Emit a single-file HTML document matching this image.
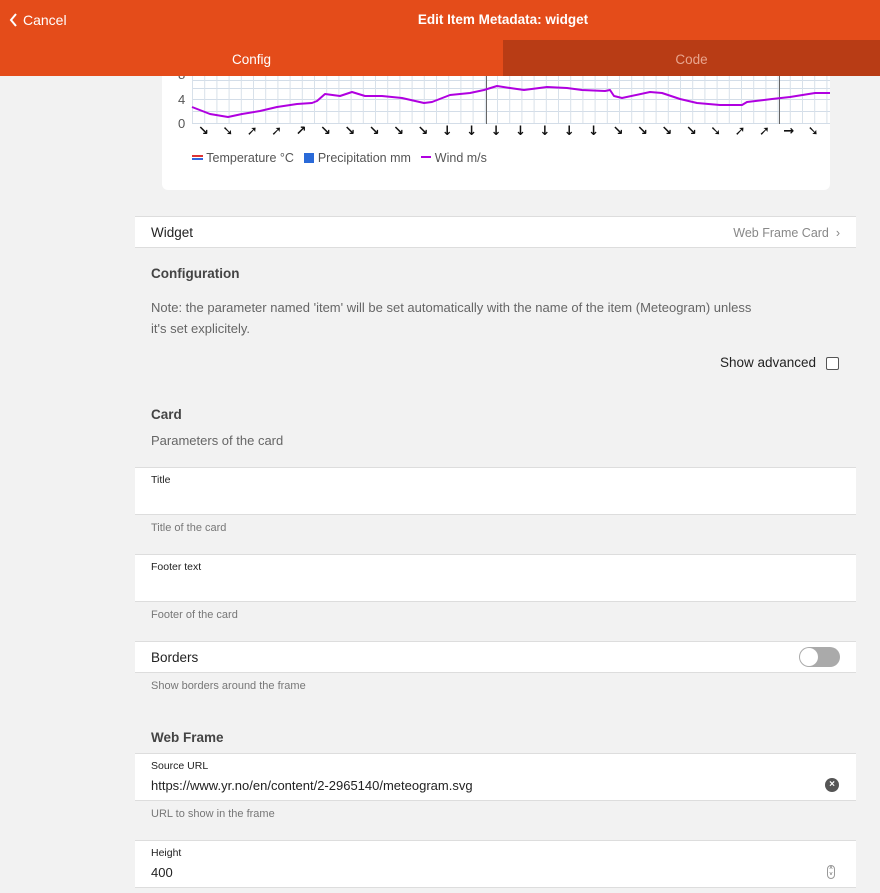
<!DOCTYPE html>
<html><head><meta charset="utf-8"><style>
*{margin:0;padding:0;box-sizing:border-box}
body{width:880px;height:893px;overflow:hidden;background:#f2f2f2;font-family:"Liberation Sans",sans-serif;position:relative;color:#222}
.a{position:absolute}
.hdr{left:0;top:0;width:880px;height:40px;background:#e44c1a;color:#fff}
.row{position:absolute;left:135px;width:721px;background:#fff;border-top:1px solid #ddd;border-bottom:1px solid #ddd}
.sm{font-size:10.5px;color:#222}
.gray{color:#777;font-size:11px}
.hd{font-size:13.5px;font-weight:bold;color:#444}
.ar span{display:inline-block;width:24.4px}
</style></head><body>
<div class="a hdr">
 <svg class="a" style="left:9px;top:13px" width="10" height="14"><path d="M7 1 L2 7 L7 13" fill="none" stroke="#fff" stroke-width="2"/></svg>
 <div class="a" style="left:23px;top:12px;font-size:14px">Cancel</div>
 <div class="a" style="left:0;width:1006px;text-align:center;top:12px;font-size:13.5px;font-weight:bold">Edit Item Metadata: widget</div>
</div>
<div class="a" style="left:0;top:40px;width:503px;height:36px;background:#e44c1a;color:#fff;font-size:13.5px;text-align:center;line-height:40px">Config</div>
<div class="a" style="left:503px;top:40px;width:377px;height:36px;background:#b83c15;color:#e8a58e;font-size:13.5px;text-align:center;line-height:40px">Code</div>

<div class="a" style="left:162px;top:76px;width:668px;height:114px;background:#fff;border-radius:0 0 6px 6px"></div>
<svg class="a" style="left:162px;top:76px" width="668" height="90">
 <g stroke="#d3dde8" stroke-width="1">
  <line x1="30" y1="4.5" x2="668" y2="4.5"/><line x1="30" y1="12.5" x2="668" y2="12.5"/><line x1="30" y1="23.5" x2="668" y2="23.5"/><line x1="30" y1="35.5" x2="668" y2="35.5"/><line x1="30" y1="47.5" x2="668" y2="47.5"/>
 </g>
 <g stroke="#d8e1ea" stroke-width="1" id="v"></g>
 <script>
 var g=document.getElementById('v');for(var x=30.5;x<668;x+=12.2){var l=document.createElementNS('http://www.w3.org/2000/svg','line');l.setAttribute('x1',x);l.setAttribute('x2',x);l.setAttribute('y1',0);l.setAttribute('y2',47);g.appendChild(l);}
 </script>
 <line x1="324.5" y1="0" x2="324.5" y2="48" stroke="#666"/>
 <line x1="617.5" y1="0" x2="617.5" y2="48" stroke="#666"/>
 <text x="16" y="3" font-size="13" fill="#555" font-family="Liberation Sans">8</text>
 <text x="16" y="28" font-size="13" fill="#555" font-family="Liberation Sans">4</text>
 <text x="16" y="52" font-size="13" fill="#555" font-family="Liberation Sans">0</text>
 <polyline fill="none" stroke="#b000e0" stroke-width="2" stroke-linejoin="round" points="30,31 48,38 66,41 80,38 98,35 115,31 135,28 150,27 155,25 163,18 178,20 190,16 203,20 220,20 240,22 262,27 270,26 288,19 308,17 322,14 335,10 348,12 362,14 385,11 405,12 420,14 443,15 448,14 452,20 460,22 488,16 500,17 518,23 535,27 558,29 580,29 585,26 610,23 628,21 653,17 668,17"/>
</svg>
<div class="a ar" style="left:198px;top:124px;width:640px;font-family:'DejaVu Sans',sans-serif;font-size:13px;font-weight:bold;color:#111;white-space:nowrap">
<span>↘</span><span>➘</span><span>➚</span><span>➚</span><span>↗</span><span>↘</span><span>↘</span><span>↘</span><span>↘</span><span>↘</span><span>↓</span><span>↓</span><span>↓</span><span>↓</span><span>↓</span><span>↓</span><span>↓</span><span>↘</span><span>↘</span><span>↘</span><span>↘</span><span>➘</span><span>➚</span><span>➚</span><span>→</span><span>➘</span>
</div>
<div class="a" style="left:192px;top:151px;font-size:12.5px;color:#555;white-space:nowrap">
 <span style="display:inline-block;width:11px;height:5px;border-top:2px solid #d33;border-bottom:2px solid #36d;vertical-align:2px"></span> Temperature °C&nbsp;&nbsp;
 <span style="display:inline-block;width:10px;height:10px;background:#2a6ad8;vertical-align:-1px"></span> Precipitation mm&nbsp;&nbsp;
 <span style="display:inline-block;width:10px;height:2px;background:#b000e0;vertical-align:4px"></span> Wind m/s
</div>

<div class="row" style="top:216px;height:32px"><span class="a" style="left:16px;top:8px;font-size:13.5px">Widget</span><span class="a" style="right:16px;top:9px;font-size:12.5px;color:#888">Web Frame Card&nbsp;&nbsp;›</span></div>
<div class="a hd" style="left:151px;top:266px">Configuration</div>
<div class="a" style="left:151px;top:297px;width:615px;font-size:13px;color:#666;line-height:21px">Note: the parameter named 'item' will be set automatically with the name of the item (Meteogram) unless it's set explicitely.</div>
<div class="a" style="left:720px;top:355px;font-size:13.5px">Show advanced</div>
<div class="a" style="left:826px;top:357px;width:13px;height:13px;border:1px solid #555;border-radius:2px;background:#fff"></div>
<div class="a hd" style="left:151px;top:407px">Card</div>
<div class="a" style="left:151px;top:433px;font-size:13px;color:#666">Parameters of the card</div>

<div class="row" style="top:467px;height:48px"><span class="a sm" style="left:16px;top:6px">Title</span></div>
<div class="a gray" style="left:151px;top:522px">Title of the card</div>
<div class="row" style="top:554px;height:48px"><span class="a sm" style="left:16px;top:6px">Footer text</span></div>
<div class="a gray" style="left:151px;top:609px">Footer of the card</div>
<div class="row" style="top:641px;height:32px"><span class="a" style="left:16px;top:8px;font-size:13.5px">Borders</span>
 <div class="a" style="left:664px;top:5px;width:41px;height:20px;border-radius:10px;background:#aaa"><div class="a" style="left:1px;top:1px;width:18px;height:18px;border-radius:50%;background:#fff"></div></div></div>
<div class="a gray" style="left:151px;top:680px">Show borders around the frame</div>
<div class="a hd" style="left:151px;top:730px">Web Frame</div>
<div class="row" style="top:753px;height:48px"><span class="a sm" style="left:16px;top:6px">Source URL</span><span class="a" style="left:16px;top:24px;font-size:13px">https://www.yr.no/en/content/2-2965140/meteogram.svg</span>
 <div class="a" style="left:690px;top:24px;width:14px;height:14px;border-radius:50%;background:#555;color:#fff;font-size:10px;font-weight:bold;text-align:center;line-height:14px">×</div></div>
<div class="a gray" style="left:151px;top:808px">URL to show in the frame</div>
<div class="row" style="top:840px;height:48px"><span class="a sm" style="left:16px;top:6px">Height</span><span class="a" style="left:16px;top:24px;font-size:13px">400</span>
 <div class="a" style="left:692px;top:24px;width:8px;height:14px;border:1px solid #999;border-radius:4px;font-size:6px;line-height:6px;text-align:center;color:#555">˄<br>˅</div></div>
</body></html>
